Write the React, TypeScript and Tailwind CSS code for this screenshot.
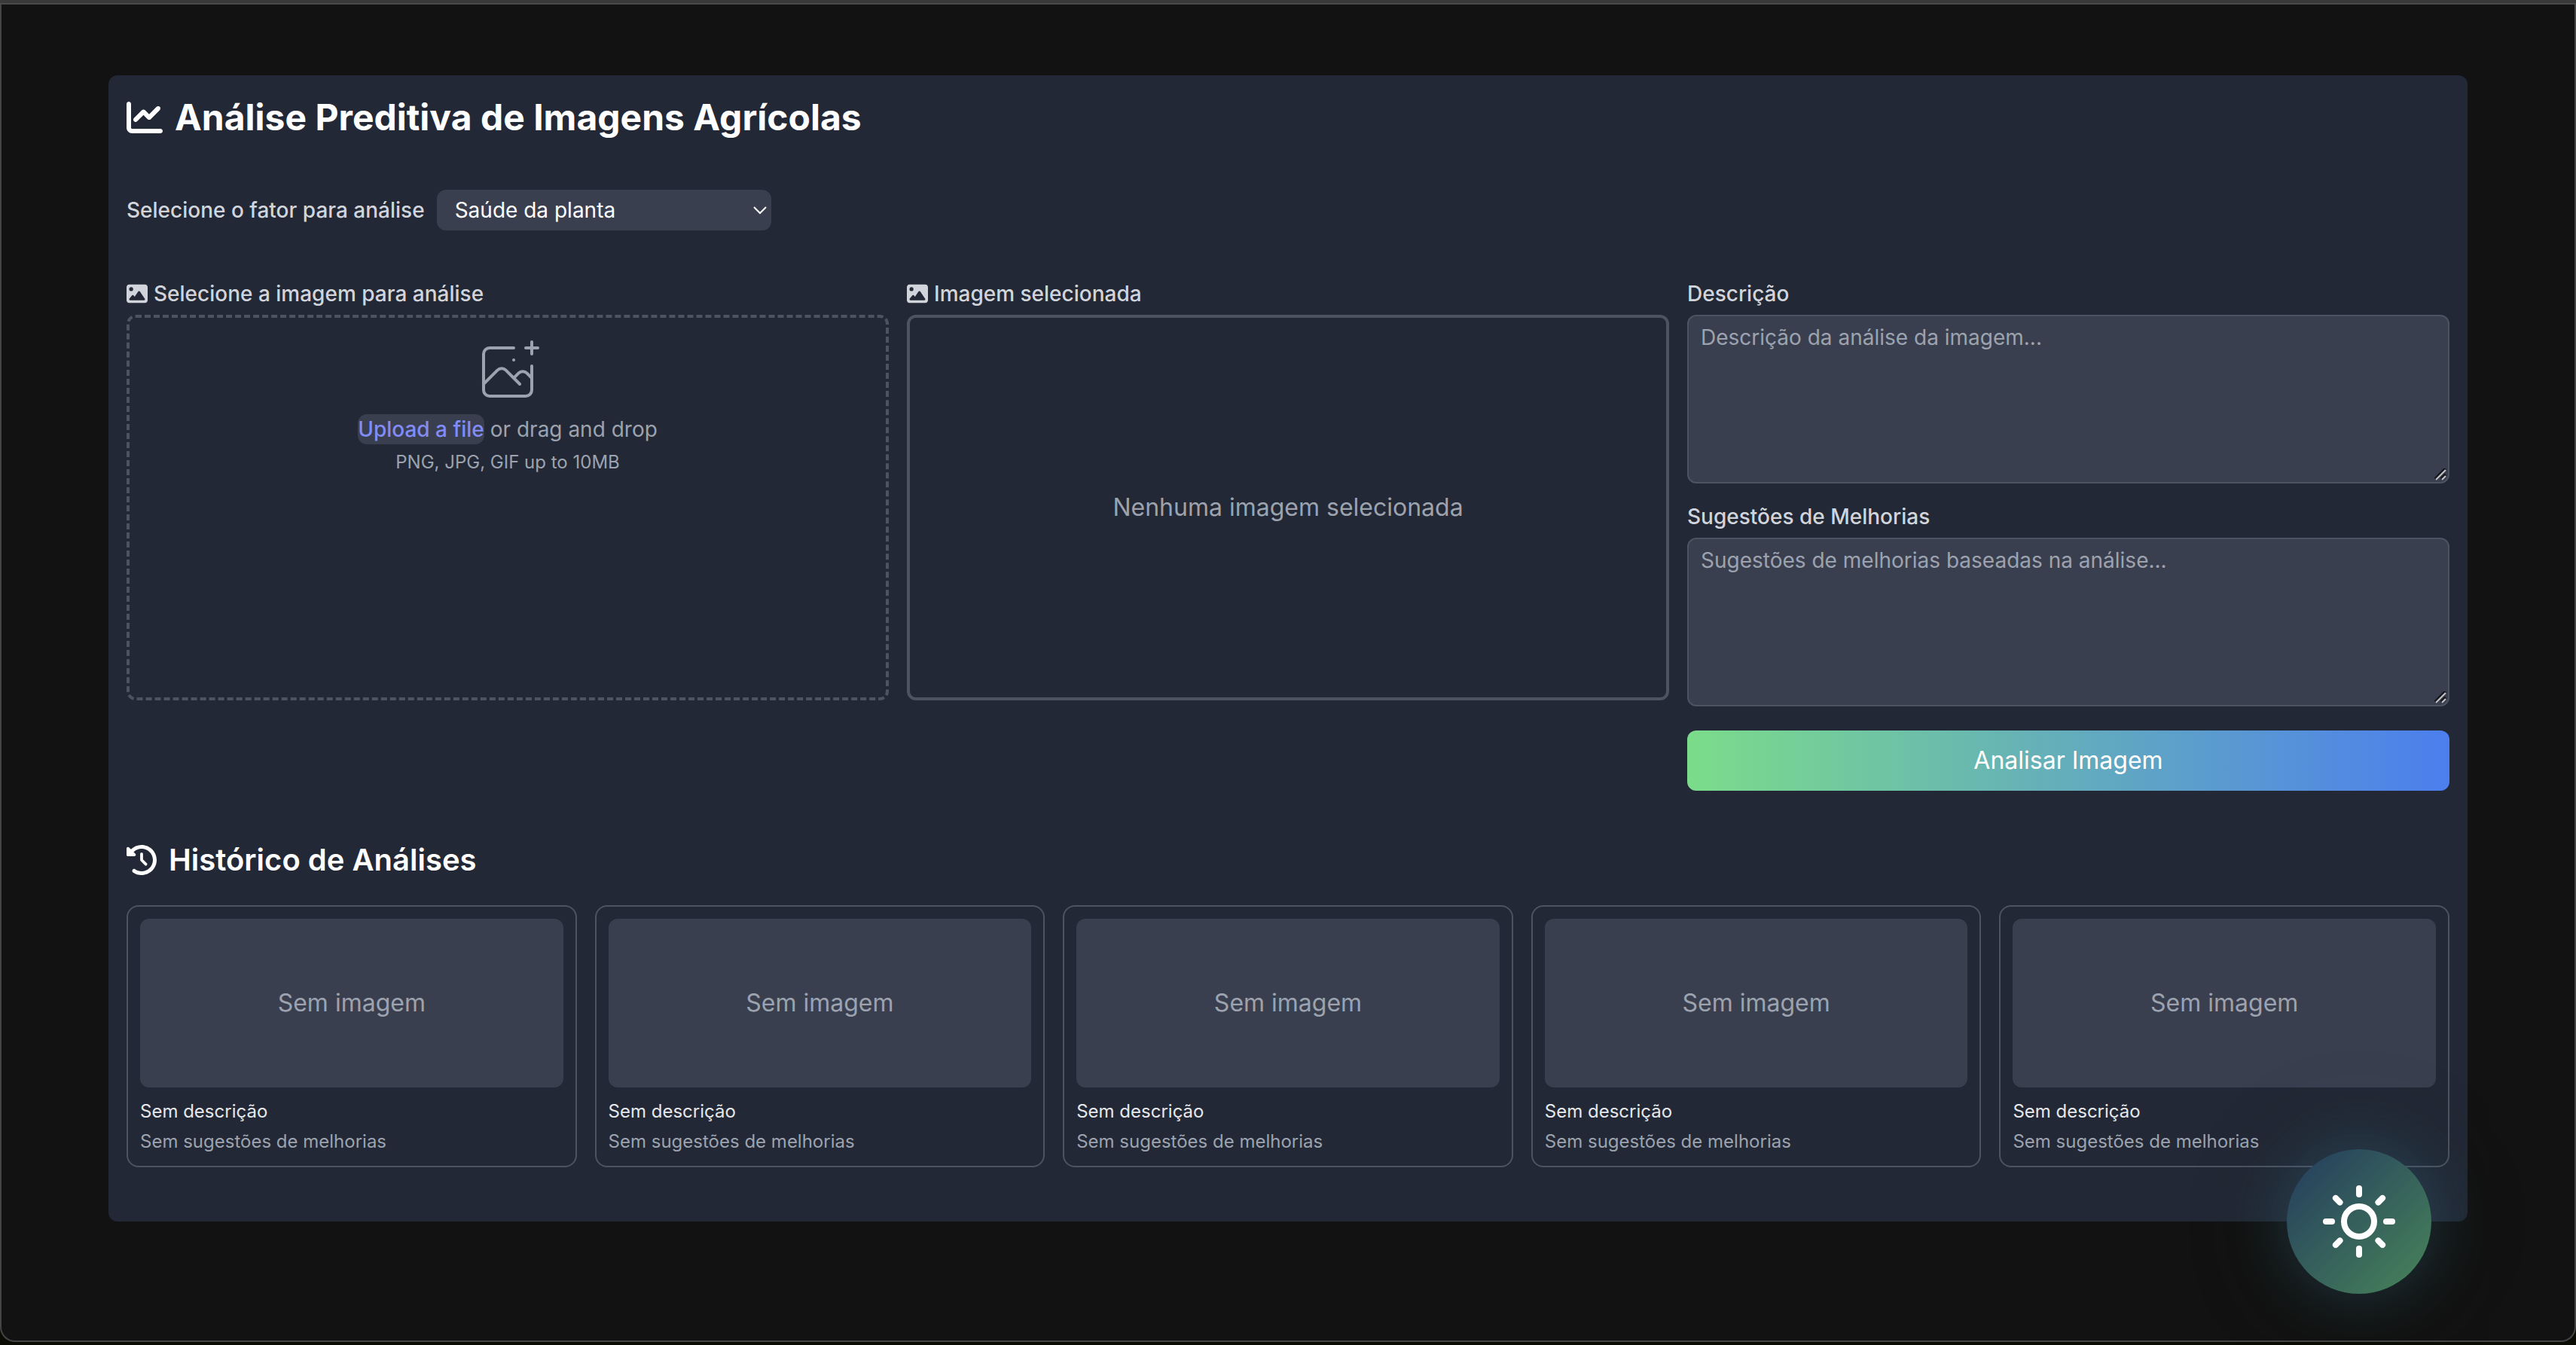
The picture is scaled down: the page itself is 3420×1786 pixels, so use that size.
import { useState } from "react";
import { FaChartLine, FaImage, FaClockRotateLeft } from "react-icons/fa6";
import { FiSun } from "react-icons/fi";

const factors = ["Saúde da planta", "Pragas", "Irrigação", "Qualidade do solo"];
const history = [1, 2, 3, 4, 5];

function UploadIcon() {
  return (
    <svg className="size-24 text-[#9ca3af]" viewBox="0 0 48 48" fill="none" stroke="currentColor" aria-hidden="true">
      <path
        d="M28 8H12a4 4 0 00-4 4v20m32-12v8m0 0v8a4 4 0 01-4 4H12a4 4 0 01-4-4v-4m32-4l-3.172-3.172a4 4 0 00-5.656 0L28 28M8 32l9.172-9.172a4 4 0 015.656 0L28 28m0 0l4 4m4-24h8m-4-4v8m-12 4h.02"
        strokeWidth="2"
        strokeLinecap="round"
        strokeLinejoin="round"
      />
    </svg>
  );
}

function ResizeGrip() {
  return (
    <svg
      className="pointer-events-none absolute right-1 bottom-1 size-4"
      viewBox="0 0 16 16"
      fill="none"
      aria-hidden="true"
    >
      <path d="M1 14L15 0M9 14l6-6" stroke="#15181f" strokeWidth="4" />
      <path d="M2 15L15 2M10 15l5-5" stroke="#c4c5c8" strokeWidth="2" />
    </svg>
  );
}

function SelectField() {
  return (
    <div className="mt-16 flex items-center gap-4">
      <label htmlFor="factor" className="text-[28px] leading-10 font-medium text-[#d1d5db]">
        Selecione o fator para análise
      </label>
      <div className="relative">
        <select
          id="factor"
          className="h-[54px] w-[444px] appearance-none rounded-xl bg-[#3a3f4f] px-6 text-[28px] leading-10 text-white"
        >
          {factors.map((f) => (
            <option key={f}>{f}</option>
          ))}
        </select>
        <svg
          className="pointer-events-none absolute top-1/2 right-1.5 h-3 w-[18px] -translate-y-1/2"
          viewBox="0 0 18 12"
          fill="none"
          stroke="white"
          strokeWidth="2"
          aria-hidden="true"
        >
          <path d="M1 2l8 8 8-8" />
        </svg>
      </div>
    </div>
  );
}

function TextField({ id, label, placeholder }: { id: string; label: string; placeholder: string }) {
  return (
    <div className="flex flex-col gap-2">
      <label htmlFor={id} className="text-[28px] leading-10 font-medium text-[#d1d5db]">
        {label}
      </label>
      <div className="relative">
        <textarea
          id={id}
          placeholder={placeholder}
          className="block h-56 w-full resize-none rounded-xl border-2 border-[#4d5361] bg-[#3a3f4f] px-4 py-2 text-[28px] leading-10 text-white placeholder:text-[#9ca3af]"
        />
        <ResizeGrip />
      </div>
    </div>
  );
}

function HistoryCard() {
  return (
    <article className="rounded-2xl border-2 border-[#4d5361] p-4">
      <div className="flex h-56 items-center justify-center rounded-xl bg-[#3a3f4f] text-[32px] leading-12 text-[#9ca3af]">
        Sem imagem
      </div>
      <p className="mt-4 text-2xl text-[#e5e7eb]">Sem descrição</p>
      <p className="mt-2 text-2xl text-[#9ca3af]">Sem sugestões de melhorias</p>
    </article>
  );
}

export default function App() {
  const [dark, setDark] = useState(true);
  return (
    <div className="flex min-h-screen flex-col bg-[#0b0c04] pb-1 font-['Inter',sans-serif]">
      <div className="h-1.5 border-b-2 border-[#4a4a4a] bg-[#3a3a3a]" />
      <div className="flex-1 rounded-b-[20px] border-x-2 border-b-2 border-[#454545] bg-[#121212] px-[142px] pt-[94px] pb-[158px]">
        <main className="rounded-xl bg-[#222835] px-6 pt-6 pb-18">
          <h1 className="flex items-center gap-4 text-5xl leading-16 font-bold text-white">
            <FaChartLine aria-hidden="true" />
            Análise Preditiva de Imagens Agrícolas
          </h1>

          <SelectField />

          <div className="mt-16 grid grid-cols-3 gap-6">
            <section className="flex flex-col gap-2">
              <h2 className="flex items-center gap-2 text-[28px] leading-10 font-medium text-[#d1d5db]">
                <FaImage aria-hidden="true" />
                Selecione a imagem para análise
              </h2>
              <div className="flex h-128 flex-col items-center gap-2 rounded-xl border-4 border-dashed border-[#4d5361] pt-6">
                <UploadIcon />
                <div className="flex text-[28px] leading-10 text-[#9ca3af]">
                  <label htmlFor="upload" className="rounded-xl bg-[#3a3f4f] font-medium text-[#818cf8]">
                    Upload a file
                    <input id="upload" type="file" className="sr-only" />
                  </label>
                  <p className="pl-2">or drag and drop</p>
                </div>
                <p className="text-2xl text-[#9ca3af]">PNG, JPG, GIF up to 10MB</p>
              </div>
            </section>

            <section className="flex flex-col gap-2">
              <h2 className="flex items-center gap-2 text-[28px] leading-10 font-medium text-[#d1d5db]">
                <FaImage aria-hidden="true" />
                Imagem selecionada
              </h2>
              <div className="flex h-128 items-center justify-center rounded-xl border-4 border-[#4d5361] text-[32px] leading-12 text-[#9ca3af]">
                Nenhuma imagem selecionada
              </div>
            </section>

            <section className="flex flex-col gap-6">
              <TextField id="description" label="Descrição" placeholder="Descrição da análise da imagem..." />
              <TextField
                id="suggestions"
                label="Sugestões de Melhorias"
                placeholder="Sugestões de melhorias baseadas na análise..."
              />
              <button
                type="button"
                className="mt-2 h-20 rounded-xl bg-linear-to-r/srgb from-[#7bdc8a] to-[#4c7eee] text-[32px] leading-12 text-white"
              >
                Analisar Imagem
              </button>
            </section>
          </div>

          <h2 className="mt-16 flex items-center gap-4 text-[40px] leading-14 font-semibold text-white">
            <FaClockRotateLeft aria-hidden="true" />
            Histórico de Análises
          </h2>
          <div className="mt-8 grid grid-cols-5 gap-6">
            {history.map((n) => (
              <HistoryCard key={n} />
            ))}
          </div>
        </main>
      </div>

      <button
        type="button"
        aria-label="Alternar tema"
        aria-pressed={dark}
        onClick={() => setDark(!dark)}
        className="fixed right-48 bottom-[68px] flex size-48 items-center justify-center rounded-full bg-linear-135/srgb from-[#233b5e] to-[#488559] text-white shadow-[0_0_80px_rgba(58,110,140,0.35),0_0_160px_rgba(50,110,90,0.15)]"
      >
        <FiSun className="size-24" aria-hidden="true" />
      </button>
    </div>
  );
}
